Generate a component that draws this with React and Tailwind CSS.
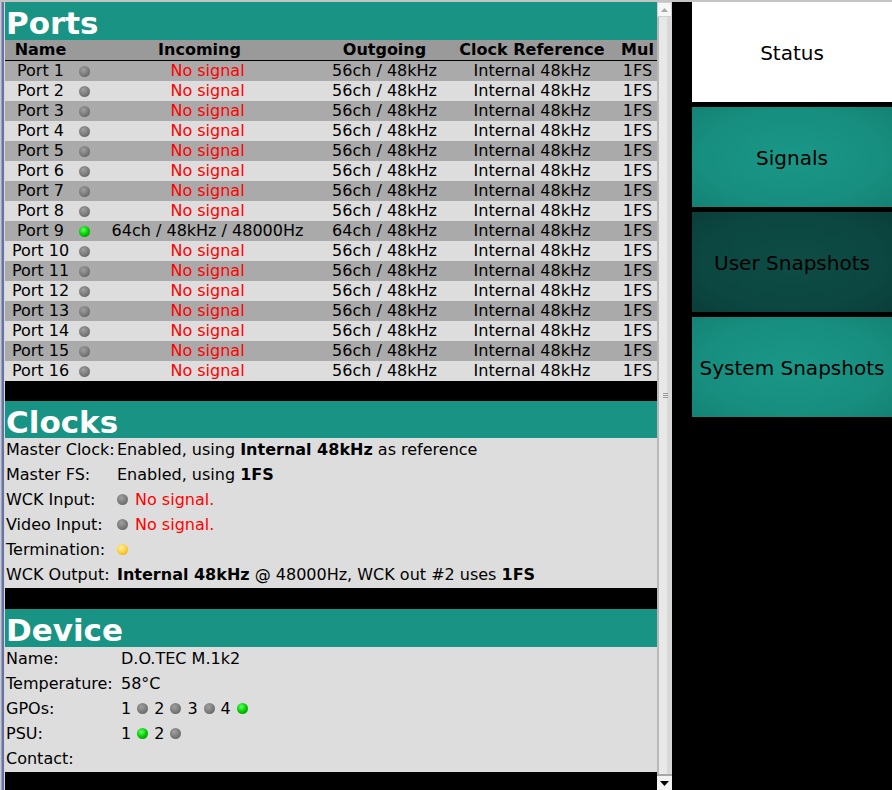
import React from "react";

const GRAY_DOT = "bg-[radial-gradient(circle_at_40%_35%,#a0a0a0_0%,#7c7c7c_50%,#555555_100%)]";
const GREEN_DOT = "bg-[radial-gradient(circle_at_40%_35%,#66ff66_0%,#00cc00_50%,#007a00_100%)]";
const YELLOW_DOT = "bg-[radial-gradient(circle_at_40%_35%,#fff0a0_0%,#ffcc33_55%,#d09a00_100%)]";

function Dot({ kind = "gray" }) {
  const cls = kind === "green" ? GREEN_DOT : kind === "yellow" ? YELLOW_DOT : GRAY_DOT;
  return <span className={`inline-block w-[11px] h-[11px] rounded-full shrink-0 ${cls}`} />;
}

const COLS = "grid grid-cols-[71px_16px_231px_123px_172px_39px]";

function PortRow({ i }) {
  const n = i + 1;
  const active = n === 9;
  const bg = i % 2 === 0 ? "bg-[#aaaaaa]" : "bg-[#dddddd]";
  return (
    <div className={`${COLS} h-[20px] leading-[20px] ${bg} whitespace-nowrap`}>
      <div className="text-center">Port {n}</div>
      <div className="flex items-center justify-center">
        <Dot kind={active ? "green" : "gray"} />
      </div>
      <div className={`text-center ${active ? "text-black" : "text-[#ff0000]"}`}>
        {active ? "64ch / 48kHz / 48000Hz" : "No signal"}
      </div>
      <div className="text-center">{active ? "64ch / 48kHz" : "56ch / 48kHz"}</div>
      <div className="text-center">Internal 48kHz</div>
      <div className="text-center">1FS</div>
    </div>
  );
}

function SectionHeader({ title, h }) {
  return (
    <div className={`${h} bg-[#189384] text-white font-bold text-[31px] leading-[31px] pt-[6px] pl-[1px]`}>
      {title}
    </div>
  );
}

function InfoRow({ label, children }) {
  return (
    <>
      <div className="h-[25px] leading-[23px] pl-[1px] whitespace-nowrap">{label}</div>
      <div className="h-[25px] leading-[23px] flex items-center pb-[2px] whitespace-nowrap">{children}</div>
    </>
  );
}

function NavButton({ label, variant }) {
  const styles = {
    white: "bg-white text-black",
    teal: "bg-[radial-gradient(ellipse_at_center,#1a9787_0%,#178e7f_65%,#148274_100%)] text-black",
    dark: "bg-[radial-gradient(ellipse_at_center,#0e4c45_0%,#0c4741_65%,#0a3e39_100%)] text-black",
  };
  return (
    <div className={`h-[100px] flex items-center justify-center text-[20px] pt-[2px] ${styles[variant]}`}>
      {label}
    </div>
  );
}

export default function App() {
  return (
    <div className="w-[892px] h-[790px] bg-black flex border-t-2 border-[#c4c4c4] overflow-hidden font-['DejaVu_Sans',sans-serif] text-[16px] text-black">
      {/* left frame strip */}
      <div className="w-[5px] shrink-0 bg-[linear-gradient(to_right,#c9c9d2_0px,#c9c9d2_1px,#9aa0b8_1px,#9aa0b8_2px,#6474a8_2px,#6474a8_4px,#d8d8dc_4px,#d8d8dc_5px)]" />

      {/* main panel */}
      <div className="w-[652px] shrink-0 flex flex-col">
        {/* Ports */}
        <div className="mb-[20px]">
          <SectionHeader title="Ports" h="h-[38px]" />
          <div className={`${COLS} h-[21px] leading-[20px] bg-[#9a9a9a] font-bold border-b border-black whitespace-nowrap`}>
            <div className="text-center">Name</div>
            <div className="col-span-2 text-center">Incoming</div>
            <div className="text-center">Outgoing</div>
            <div className="text-center">Clock Reference</div>
            <div className="text-center overflow-hidden">Mul</div>
          </div>
          {Array.from({ length: 16 }, (_, i) => (
            <PortRow key={i} i={i} />
          ))}
        </div>

        {/* Clocks */}
        <div className="mb-[21px]">
          <SectionHeader title="Clocks" h="h-[37px]" />
          <div className="bg-[#dddddd] grid grid-cols-[108px_1fr] gap-x-[4px]">
            <InfoRow label="Master Clock:">
              <span>Enabled, using <b>Internal 48kHz</b> as reference</span>
            </InfoRow>
            <InfoRow label="Master FS:">
              <span>Enabled, using <b>1FS</b></span>
            </InfoRow>
            <InfoRow label="WCK Input:">
              <span className="flex items-center gap-[7px]">
                <Dot />
                <span className="text-[#ff0000]">No signal.</span>
              </span>
            </InfoRow>
            <InfoRow label="Video Input:">
              <span className="flex items-center gap-[7px]">
                <Dot />
                <span className="text-[#ff0000]">No signal.</span>
              </span>
            </InfoRow>
            <InfoRow label="Termination:">
              <Dot kind="yellow" />
            </InfoRow>
            <InfoRow label="WCK Output:">
              <span><b>Internal 48kHz</b> @ 48000Hz, WCK out #2 uses <b>1FS</b></span>
            </InfoRow>
          </div>
        </div>

        {/* Device */}
        <div>
          <SectionHeader title="Device" h="h-[38px]" />
          <div className="bg-[#dddddd] grid grid-cols-[112px_1fr] gap-x-[4px]">
            <InfoRow label="Name:">
              <span>D.O.TEC M.1k2</span>
            </InfoRow>
            <InfoRow label="Temperature:">
              <span>58°C</span>
            </InfoRow>
            <InfoRow label="GPOs:">
              <span className="flex items-center gap-[6px]">
                <span>1</span><Dot />
                <span>2</span><Dot />
                <span>3</span><Dot />
                <span>4</span><Dot kind="green" />
              </span>
            </InfoRow>
            <InfoRow label="PSU:">
              <span className="flex items-center gap-[6px]">
                <span>1</span><Dot kind="green" />
                <span>2</span><Dot />
              </span>
            </InfoRow>
            <InfoRow label="Contact:">
              <span />
            </InfoRow>
          </div>
        </div>
      </div>

      {/* scrollbar */}
      <div className="w-[15px] shrink-0 flex flex-col bg-[#e6e6e6]">
        <div className="h-[15px] bg-[#f6f6f6] border border-[#d0d0d0] flex items-center justify-center">
          <svg width="7" height="4" viewBox="0 0 7 4">
            <polygon points="0,4 7,4 3.5,0" fill="#a8a8a8" />
          </svg>
        </div>
        <div className="flex-1 border-l-2 border-[#b8b8b8] bg-[linear-gradient(to_right,#e8e8e8_0%,#e8e8e8_60%,#d8d8d8_60%,#d8d8d8_100%)] flex items-center justify-center">
          <div className="flex flex-col gap-[1px]">
            <div className="w-[5px] h-[1px] bg-[#9a9a9a]" />
            <div className="w-[5px] h-[1px] bg-[#9a9a9a]" />
            <div className="w-[5px] h-[1px] bg-[#9a9a9a]" />
          </div>
        </div>
        <div className="h-[2px] bg-[#a8a8a8]" />
        <div className="h-[14px] bg-[#f4f4f4] flex items-center justify-center">
          <svg width="9" height="5" viewBox="0 0 9 5">
            <polygon points="0,0 9,0 4.5,5" fill="#000000" />
          </svg>
        </div>
      </div>

      {/* gap */}
      <div className="w-[20px] shrink-0" />

      {/* nav */}
      <div className="w-[200px] shrink-0 flex flex-col gap-[5px]">
        <NavButton label="Status" variant="white" />
        <NavButton label="Signals" variant="teal" />
        <NavButton label="User Snapshots" variant="dark" />
        <NavButton label="System Snapshots" variant="teal" />
      </div>
    </div>
  );
}
